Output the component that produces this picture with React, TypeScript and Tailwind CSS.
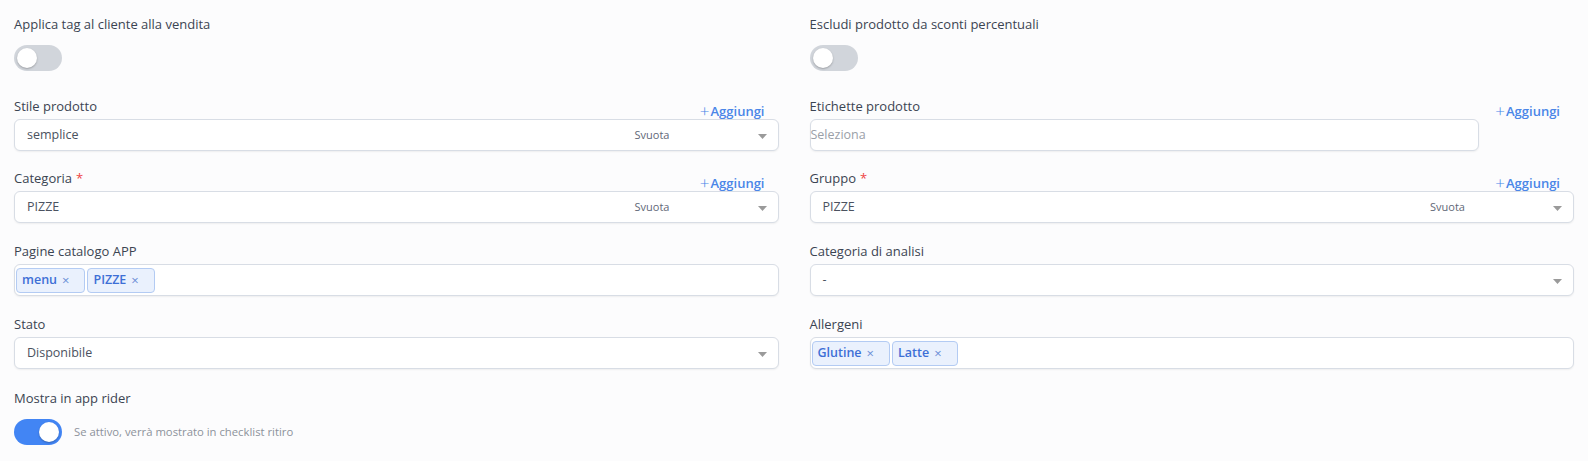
import { useState } from "react";

type Tag = { id: string; label: string };

function Toggle({ on, onChange }: { on: boolean; onChange: () => void }) {
  return (
    <button
      type="button"
      onClick={onChange}
      className={`relative h-[26px] w-[48px] shrink-0 rounded-full transition-colors ${
        on ? "bg-[#4285f4]" : "bg-[#d1d5db]"
      }`}
    >
      <span
        className={`absolute top-[3px] h-[20px] w-[20px] rounded-full bg-white shadow-[0_1px_2px_rgba(0,0,0,0.25)] transition-all ${
          on ? "left-[25px]" : "left-[3px]"
        }`}
      />
    </button>
  );
}

function Label({ text, required }: { text: string; required?: boolean }) {
  return (
    <div className="mb-[3px] h-5 text-[13px] leading-5 text-[#3b4452]">
      {text}
      {required && <span className="ml-1 text-[#ef4444]">*</span>}
    </div>
  );
}

function AddLink() {
  return (
    <button
      type="button"
      className="absolute right-[14px] top-[5px] flex items-center text-[13px] font-semibold leading-5 text-[#4a86e8]"
    >
      <span className="mr-[1px] font-light text-[17px] leading-5">+</span>
      Aggiungi
    </button>
  );
}

function Caret() {
  return (
    <svg width="9" height="5" viewBox="0 0 9 5" className="absolute right-[11px] top-[14px]">
      <path d="M0 0h9L4.5 5z" fill="#9a9a9a" />
    </svg>
  );
}

function SelectBox({ value, clearable }: { value: string; clearable?: boolean }) {
  return (
    <div className="relative h-[32px] rounded-md border border-[#d8dde5] bg-white shadow-[0_1px_2px_rgba(0,0,0,0.06)]">
      <span className="absolute left-[12px] top-0 text-[12.5px] leading-[30px] text-[#4b5260]">{value}</span>
      {clearable && (
        <span className="absolute right-[108px] top-0 text-[11px] leading-[30px] text-[#5f6877]">Svuota</span>
      )}
      <Caret />
    </div>
  );
}

function TagBox({ tags, onRemove }: { tags: Tag[]; onRemove: (id: string) => void }) {
  return (
    <div className="flex h-[32px] items-center gap-[2px] rounded-md border border-[#d8dde5] bg-white px-[1px] shadow-[0_1px_2px_rgba(0,0,0,0.06)]">
      {tags.map((t) => (
        <span
          key={t.id}
          className="flex h-[25px] items-center rounded-[4px] border border-[#b3cbf3] bg-[#eaf1fd] pl-[5px] pr-[15px] text-[12.5px] font-semibold text-[#3d6fd6]"
        >
          {t.label}
          <button
            type="button"
            onClick={() => onRemove(t.id)}
            className="ml-[5px] text-[13px] font-normal leading-none text-[#6b8fd6]"
          >
            ×
          </button>
        </span>
      ))}
    </div>
  );
}

export default function App() {
  const [applyTag, setApplyTag] = useState(false);
  const [noDiscount, setNoDiscount] = useState(false);
  const [showRider, setShowRider] = useState(true);
  const [pages, setPages] = useState<Tag[]>([
    { id: "menu", label: "menu" },
    { id: "pizze", label: "PIZZE" },
  ]);
  const [allergens, setAllergens] = useState<Tag[]>([
    { id: "glutine", label: "Glutine" },
    { id: "latte", label: "Latte" },
  ]);

  return (
    <div className="min-h-screen bg-[#fcfcfd] px-[14px] pt-[14px] font-['Open_Sans','Lato',sans-serif]">
      <div className="grid grid-cols-2 gap-x-[31px]">
        {/* interruttori in alto */}
        <div className="mb-[19px]">
          <div className="mb-[11px] h-5 text-[13px] leading-5 text-[#3b4452]">Applica tag al cliente alla vendita</div>
          <Toggle on={applyTag} onChange={() => setApplyTag(!applyTag)} />
        </div>
        <div className="mb-[19px]">
          <div className="mb-[11px] h-5 text-[13px] leading-5 text-[#3b4452]">Escludi prodotto da sconti percentuali</div>
          <Toggle on={noDiscount} onChange={() => setNoDiscount(!noDiscount)} />
        </div>

        <div className="relative mb-[17px]">
          <Label text="Stile prodotto" />
          <AddLink />
          <SelectBox value="semplice" clearable />
        </div>
        <div className="relative mb-[17px]">
          <Label text="Etichette prodotto" />
          <AddLink />
          <div className="pr-[95px]">
            <div className="h-[32px] rounded-md border border-[#d8dde5] bg-white text-[12.5px] leading-[30px] text-[#9aa0a8] shadow-[0_1px_2px_rgba(0,0,0,0.06)]">
              Seleziona
            </div>
          </div>
        </div>

        <div className="relative mb-[18px]">
          <Label text="Categoria" required />
          <AddLink />
          <SelectBox value="PIZZE" clearable />
        </div>
        <div className="relative mb-[18px]">
          <Label text="Gruppo" required />
          <AddLink />
          <SelectBox value="PIZZE" clearable />
        </div>

        <div className="mb-[18px]">
          <Label text="Pagine catalogo APP" />
          <TagBox tags={pages} onRemove={(id) => setPages(pages.filter((p) => p.id !== id))} />
        </div>
        <div className="mb-[18px]">
          <Label text="Categoria di analisi" />
          <SelectBox value="-" />
        </div>

        <div className="mb-[19px]">
          <Label text="Stato" />
          <SelectBox value="Disponibile" />
        </div>
        <div className="mb-[19px]">
          <Label text="Allergeni" />
          <TagBox tags={allergens} onRemove={(id) => setAllergens(allergens.filter((a) => a.id !== id))} />
        </div>

        <div>
          <div className="mb-[11px] h-5 text-[13px] leading-5 text-[#3b4452]">Mostra in app rider</div>
          <div className="flex items-center gap-[12px]">
            <Toggle on={showRider} onChange={() => setShowRider(!showRider)} />
            <span className="text-[11.3px] text-[#8c929b]">Se attivo, verrà mostrato in checklist ritiro</span>
          </div>
        </div>
      </div>
    </div>
  );
}
